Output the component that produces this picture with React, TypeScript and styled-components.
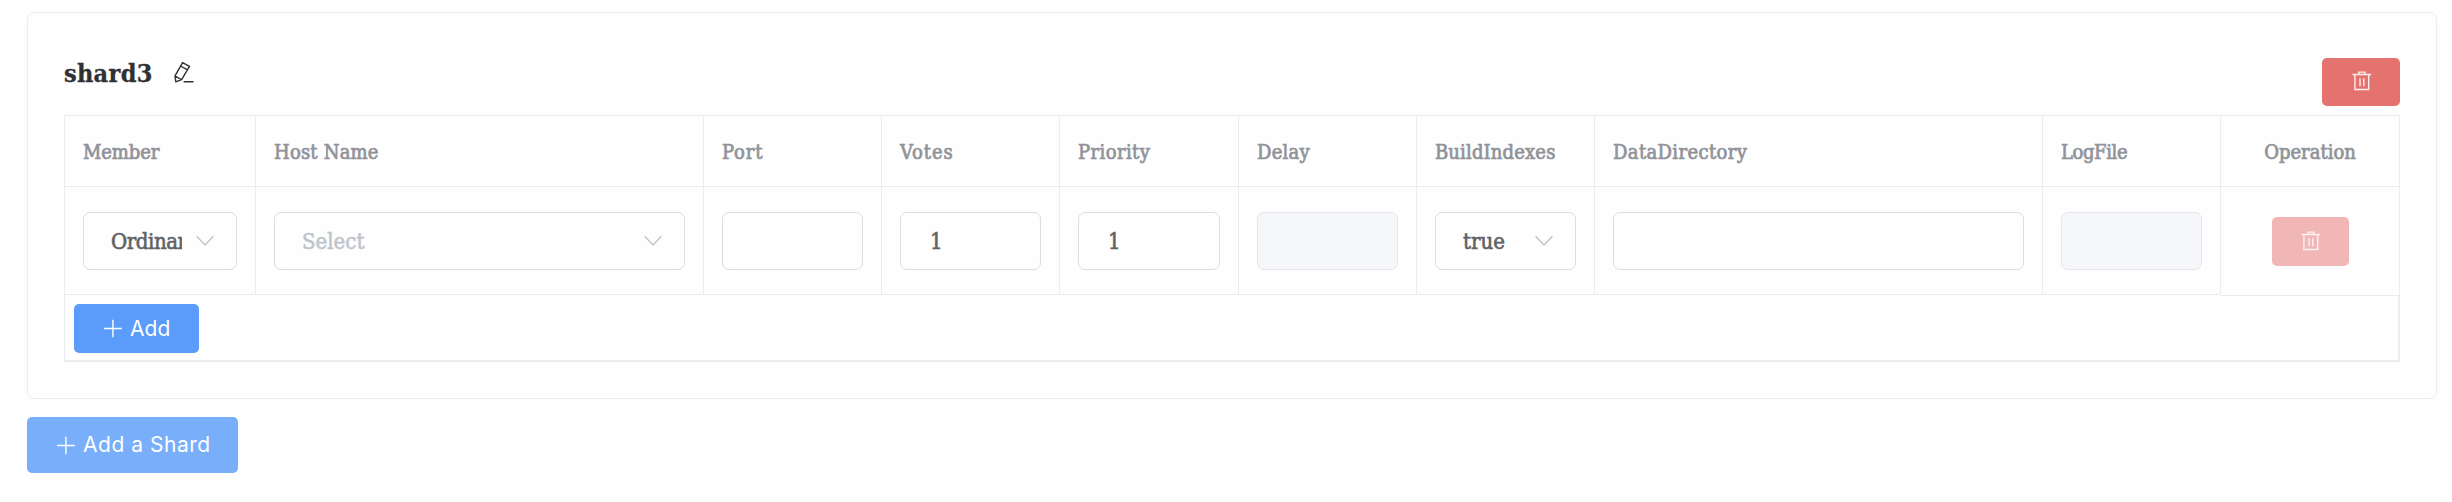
import React from "react";
import styled, { createGlobalStyle } from "styled-components";

const GlobalStyle = createGlobalStyle`
  * { box-sizing: border-box; }
  body {
    margin: 0;
    background: #fefefe;
    font-family: "DejaVu Serif Condensed", "DejaVu Serif", serif;
    color: #606266;
  }
  button { font-family: Inter, "Liberation Sans", sans-serif; margin: 0; }
`;

const line = "#ebecf0";

const Page = styled.main`
  padding: 12px 15px 29px 27px;
`;

const Card = styled.section`
  height: 387px;
  padding: 45px 36px 36px;
  border: 1px solid ${line};
  border-radius: 7px;
`;

const Header = styled.header`
  display: flex;
  align-items: flex-start;
  height: 57px;
`;

const Title = styled.h2`
  margin: 0 21px 0 0;
  width: 88px;
  font-size: 25px;
  line-height: 32px;
  letter-spacing: 0.3px;
  color: #303133;
  -webkit-text-stroke: 0.3px #303133;
  white-space: nowrap;
`;

const EditButton = styled.button`
  display: flex;
  padding: 2px 0 0;
  border: 0;
  background: none;
  color: #303133;
`;

const DangerButton = styled.button<{ $muted?: boolean }>`
  display: flex;
  justify-content: center;
  align-items: flex-start;
  width: ${(p) => (p.$muted ? 77 : 78)}px;
  height: ${(p) => (p.$muted ? 49 : 48)}px;
  padding: ${(p) => (p.$muted ? 13 : 12)}px 0 0 1px;
  border: 0;
  border-radius: 5px;
  background: ${(p) => (p.$muted ? "#f0b7b6" : "#e4736f")};
  color: ${(p) => (p.$muted ? "#fcf1f1" : "#fdeeed")};
`;

const HeaderActions = styled.div`
  margin-left: auto;
`;

const Table = styled.div`
  width: 2336px;
  border: 1px solid ${line};
  border-right: 0;
  border-bottom: 0;
`;

const Row = styled.div`
  display: grid;
  grid-template-columns: 191px 448px 178px 178px 179px 178px 178px 448px 178px 179px;
`;

const HeadCell = styled.div<{ $center?: boolean; $track: number }>`
  height: 71px;
  padding: 0 18px;
  border-right: 1px solid ${line};
  border-bottom: 1px solid ${line};
  font-size: 20px;
  line-height: 72px;
  text-align: ${(p) => (p.$center ? "center" : "left")};
  letter-spacing: ${(p) => p.$track}px;
  color: #909399;
  -webkit-text-stroke: 0.7px #909399;
  white-space: nowrap;
`;

const Cell = styled.div`
  height: 108px;
  padding: 25px 18px 0;
  border-right: 1px solid ${line};
  border-bottom: 1px solid ${line};
`;

const OperationCell = styled(Cell)`
  display: flex;
  justify-content: center;
  align-items: flex-start;
  height: 109px;
  margin-bottom: -1px;
  padding-top: 30px;
`;

const Field = styled.div<{ $disabled?: boolean; $select?: boolean }>`
  display: flex;
  align-items: center;
  height: 58px;
  padding: 2px 22px 0 ${(p) => (p.$select ? 27 : 29)}px;
  border: 1px solid ${(p) => (p.$disabled ? "#e4e6ea" : "#dcdddf")};
  border-radius: 7px;
  background: ${(p) => (p.$disabled ? "#f5f7fb" : "#fefefe")};
`;

const Value = styled.span<{ $placeholder?: boolean; $track?: number }>`
  flex: 1;
  overflow: hidden;
  white-space: nowrap;
  font-size: 22px;
  line-height: 30px;
  letter-spacing: ${(p) => p.$track ?? 0}px;
  color: ${(p) => (p.$placeholder ? "#c0c4cc" : "#606266")};
  -webkit-text-stroke: 0.6px currentColor;
`;

const Arrow = styled.svg`
  flex: none;
  width: 18px;
  height: 12px;
  margin: 0 0 2px 14px;
  color: #c0c4cc;
`;

const Footer = styled.div`
  height: 67px;
  padding: 9px 0 0 9px;
  border-right: 2px solid ${line};
  border-bottom: 2px solid ${line};
`;

const PrimaryButton = styled.button<{ $large?: boolean }>`
  display: flex;
  align-items: center;
  width: ${(p) => (p.$large ? 211 : 125)}px;
  height: ${(p) => (p.$large ? 56 : 49)}px;
  padding: 0 0 0 29px;
  border: 0;
  border-radius: 5px;
  background: ${(p) => (p.$large ? "#79aefa" : "#5b9bf9")};
  color: #fdfeff;
  font-size: 21px;
  line-height: 28px;
  letter-spacing: ${(p) => (p.$large ? 0.53 : 0.1)}px;
  white-space: nowrap;
`;

const PlusIcon = styled.svg`
  flex: none;
  margin-right: 8px;
`;

const PageActions = styled.div`
  margin-top: 18px;
`;

function Plus() {
  return (
    <PlusIcon width="19" height="19" viewBox="0 0 19 19" stroke="currentColor" strokeWidth="1.4">
      <path d="M9.9 .7v17.6M1 9.5h17.8" />
    </PlusIcon>
  );
}

function Trash() {
  return (
    <svg width="20" height="22" viewBox="0 0 20 22" fill="none" stroke="currentColor" strokeWidth="1.4">
      <path d="M.5 4.5h18.6M6.9 4.3V2.1h6v2.2M2.9 4.7v14.8h13.8V4.7M8 8.2v8M11.8 8.2v8" />
    </svg>
  );
}

function Pencil() {
  return (
    <svg width="22" height="24" viewBox="0 0 22 24" fill="none" stroke="currentColor" strokeWidth="1.4" strokeLinejoin="round">
      <path d="M9.6 2.6l6.9 3.7-7.9 13.3-5.8 2.3-.8-6.1zM7.6 6l6.9 3.8M2.1 16l6.3 3.6M10.6 21.7h10" />
    </svg>
  );
}

function Chevron() {
  return (
    <Arrow viewBox="0 0 18 12" fill="none" stroke="currentColor" strokeWidth="1.5">
      <path d="M.5 1.2L9 9.9l8.5-8.7" />
    </Arrow>
  );
}

const columns = [
  { label: "Member", track: -0.1 },
  { label: "Host Name", track: 0.2 },
  { label: "Port", track: 0.8 },
  { label: "Votes", track: 0.9 },
  { label: "Priority", track: 0.4 },
  { label: "Delay", track: 0.25 },
  { label: "BuildIndexes", track: 0.15 },
  { label: "DataDirectory", track: 0.37 },
  { label: "LogFile", track: -0.4 },
  { label: "Operation", track: 0, center: true },
];

export default function App() {
  return (
    <Page>
      <GlobalStyle />
      <Card>
        <Header>
          <Title>shard3</Title>
          <EditButton aria-label="Edit shard name"><Pencil /></EditButton>
          <HeaderActions>
            <DangerButton aria-label="Delete shard"><Trash /></DangerButton>
          </HeaderActions>
        </Header>
        <Table>
          <Row>
            {columns.map((c) => (
              <HeadCell key={c.label} $track={c.track} $center={c.center}>{c.label}</HeadCell>
            ))}
          </Row>
          <Row>
            <Cell><Field $select><Value $track={-0.45}>Ordinary</Value><Chevron /></Field></Cell>
            <Cell><Field $select><Value $placeholder>Select</Value><Chevron /></Field></Cell>
            <Cell><Field /></Cell>
            <Cell><Field><Value>1</Value></Field></Cell>
            <Cell><Field><Value>1</Value></Field></Cell>
            <Cell><Field $disabled /></Cell>
            <Cell><Field $select><Value>true</Value><Chevron /></Field></Cell>
            <Cell><Field /></Cell>
            <Cell><Field $disabled /></Cell>
            <OperationCell>
              <DangerButton $muted disabled aria-label="Delete member"><Trash /></DangerButton>
            </OperationCell>
          </Row>
          <Footer>
            <PrimaryButton><Plus />Add</PrimaryButton>
          </Footer>
        </Table>
      </Card>
      <PageActions>
        <PrimaryButton $large><Plus />Add a Shard</PrimaryButton>
      </PageActions>
    </Page>
  );
}
